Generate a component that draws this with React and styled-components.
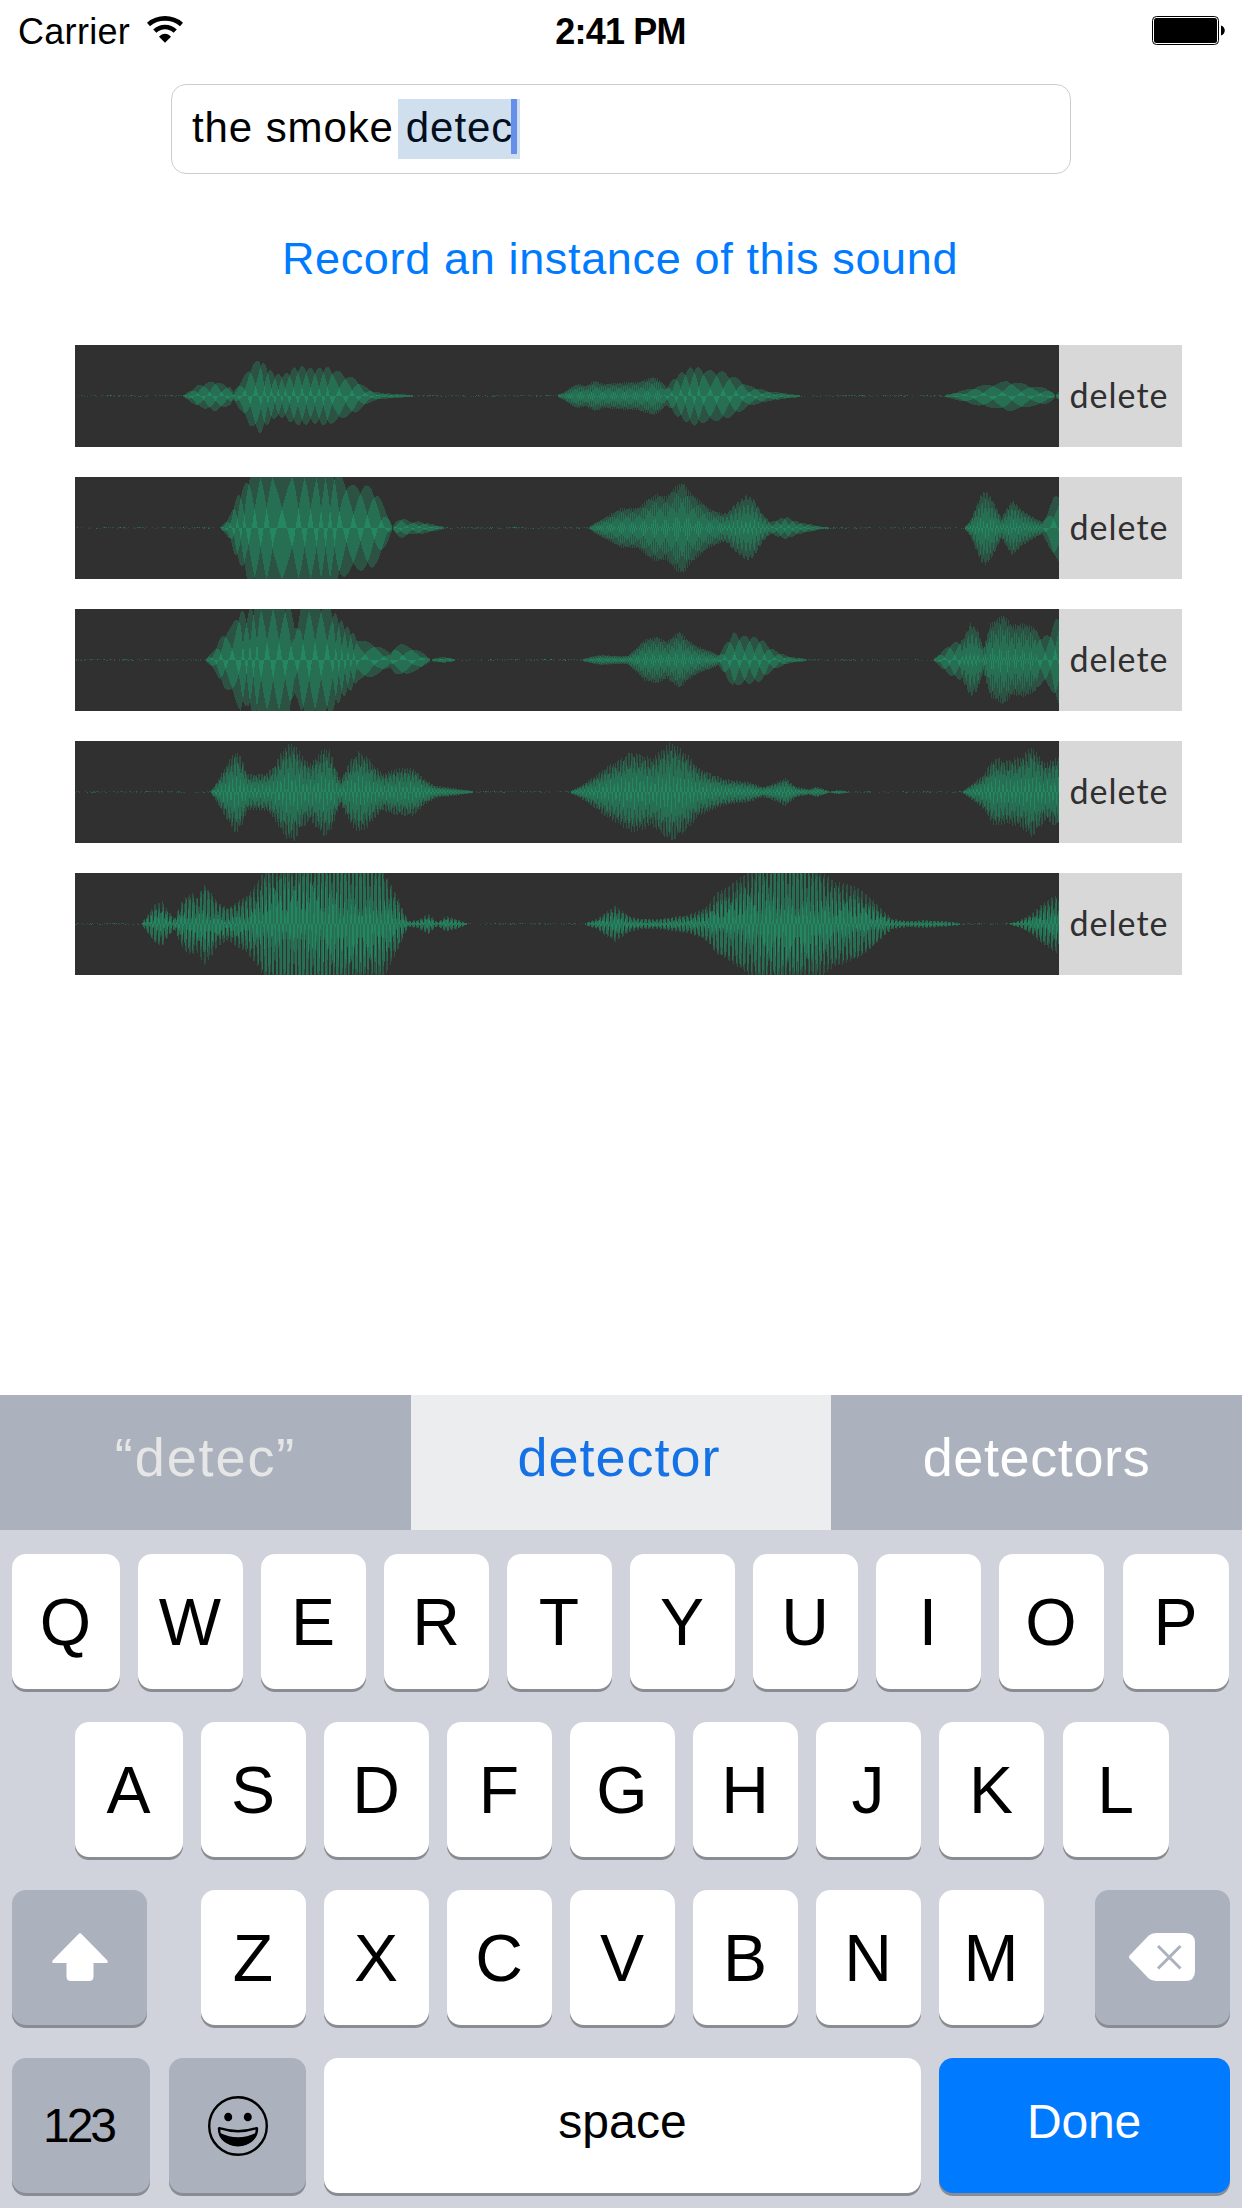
import React from 'react';
import styled, { createGlobalStyle } from 'styled-components';

const GlobalStyle = createGlobalStyle`
  *, *::before, *::after { box-sizing: border-box; }
  body { margin: 0; background: #fff; }
  button { border: 0; padding: 0; margin: 0; font: inherit; }
`;

const Screen = styled.div`
  width: 1242px;
  height: 2208px;
  display: flex;
  flex-direction: column;
  overflow: hidden;
  background: #fff;
  color: #000;
  font-family: 'Liberation Sans', Arial, sans-serif;
`;

const StatusBar = styled.header`
  height: 60px;
  padding: 0 17px 0 18px;
  display: grid;
  grid-template-columns: 1fr auto 1fr;
  font-size: 36px;
  line-height: 64px;
`;

const Carrier = styled.div`
  display: flex;
  align-items: flex-start;
  gap: 17px;
  letter-spacing: 0.3px;
  svg { margin-top: 16px; }
`;

const Clock = styled.div`
  font-weight: 700;
  letter-spacing: -0.8px;
  padding-right: 2px;
`;

const BatterySlot = styled.div`
  display: flex;
  justify-content: flex-end;
  padding-top: 16px;
`;

const Content = styled.main`
  flex: 1;
  display: flex;
  flex-direction: column;
  align-items: center;
  padding-top: 24px;
`;

const Field = styled.div`
  width: 900px;
  height: 90px;
  display: flex;
  align-items: flex-start;
  padding: 14px 20px;
  border: 1px solid #cdcdcd;
  border-radius: 15px;
  font-size: 42px;
  line-height: 58px;
  letter-spacing: 0.9px;
  white-space: pre;
`;

const Marked = styled.span`
  display: flex;
  height: 60px;
  margin-left: 4px;
  padding: 0 3px 0 8px;
  background: #d0dfee;
  color: #020f1f;
`;

const Caret = styled.i`
  width: 6px;
  height: 55px;
  margin-left: -2px;
  background: #658fe8;
`;

const RecordLink = styled.button`
  margin-top: 55px;
  height: 60px;
  padding-right: 2px;
  background: none;
  color: #007aff;
  font-size: 45px;
  line-height: 60px;
  letter-spacing: 0.65px;
`;

const Clips = styled.ul`
  list-style: none;
  width: 1107px;
  margin: 56px 0 0 15px;
  padding: 0;
  display: flex;
  flex-direction: column;
  gap: 30px;
`;

const Clip = styled.li`
  display: flex;
  height: 102px;
`;

const WaveSvg = styled.svg`
  flex: none;
  display: block;
  width: 984px;
  height: 102px;
  background: #303030;
`;

const DeleteButton = styled.button`
  flex: 1;
  padding: 0 3px 2px 0;
  background: #d8d8d8;
  color: #303030;
  font-family: Lato, sans-serif;
  font-weight: 400;
  font-size: 34px;
  line-height: 100px;
  letter-spacing: 1px;
`;

const Keyboard = styled.section`
  height: 813px;
  background: #d0d3db;
`;

const Suggestions = styled.div`
  height: 135px;
  display: grid;
  grid-template-columns: 411px 420px 411px;
`;

const Suggestion = styled.button`
  display: flex;
  justify-content: center;
  padding-right: ${(p) => p.$shift || 0}px;
  background: ${(p) => (p.$active ? '#ebedef' : '#abb1bd')};
  color: ${(p) => p.$color};
  font-size: 54px;
  line-height: 124px;
  letter-spacing: ${(p) => p.$track || 0.6}px;
`;

const Rows = styled.div`
  display: flex;
  flex-direction: column;
  gap: 33px;
  padding-top: 24px;
`;

const KeyRow = styled.div`
  display: flex;
  gap: 18px;
  height: 135px;
  padding-left: ${(p) => p.$inset}px;
`;

const tones = {
  light: ['#fff', '#000'],
  dark: ['#abb1bd', '#000'],
  blue: ['#007aff', '#fff'],
};

const Key = styled.button`
  width: ${(p) => p.$w || 105}px;
  height: 135px;
  margin-left: ${(p) => p.$ml || 0}px;
  padding-right: ${(p) => p.$shift || 0}px;
  display: flex;
  align-items: flex-start;
  justify-content: center;
  border-radius: 14px;
  background: ${(p) => tones[p.$tone || 'light'][0]};
  color: ${(p) => tones[p.$tone || 'light'][1]};
  box-shadow: 0 3px 0 #898c90;
  font-size: ${(p) => p.$size || 66}px;
  line-height: ${(p) => p.$line || 136}px;
  letter-spacing: ${(p) => p.$track || 1}px;
  svg { margin-top: ${(p) => p.$top || 0}px; }
`;

/* ---- waveforms ---- */

const WIDTH = 984;
const MID = 51;
const VOICES = 5;

// env: [x, amplitude] pairs; lobes: [x, lobe spacing] steps
const clips = [
  {
    env: [108,0.7,121,10,139,15,155,9,158,4,167,17,174,28,184,37,192,28,199,22,208,21,219,28,228,29,235,27,242,27,251,29,264,24,271,20,280,17,287,11,297,5,306,3,324,1.8,349,0.7,481,0.7,489,4,497,10,503,12,510,10,519,15,528,12,545,13,563,14,578,19,584,16,591,9,600,19,606,23,615,28,621,29,628,26,637,25,647,24,656,20,663,17,671,11,682,8,693,5,711,2.5,730,0.7,867,0.7,878,3,889,6,904,10,919,12,932,15,945,13,956,10,970,8,976,5,980,1,984,5],
    lobes: [0,12,160,11,186,7,212,8.500,256,13,481,2.2,590,9,628,13,867,19],
  },
  {
    env: [145,0.7,151,7,155,13,160,28,165,36,169,42,172,50,176,58,190,62,258,60,264,52,267,50,274,43,281,41,289,42,296,40,303,32,308,22,314,9,317,1,321,7,327,10,335,6,342,6.5,356,4,369,1,400,0.7,513,0.7,521,6,545,19,563,20,573,29,582,33,591,31,600,41,608,45,613,37,623,28,634,19,647,14,652,15,658,22,671,32,678,29,687,14,695,6,704,9,711,11,723,6,734,4,745,1.5,767,0.7,889,0.7,895,8,900,20,906,34,911,36,917,28,926,10,932,20,937,27,946,18,957,11,967,6,972,15,978,30,984,33],
    lobes: [0,7,172,12,199,20,219,12,242,9,264,14,317,12,513,2.2,648,4.2,695,8,889,3.3,966,16],
  },
  {
    env: [130,0.7,139,10,144,20,149,27,156,33,165,50,171,44,174,49,180,56,185,60,199,62,214,56,219,33,222,38,226,55,235,60,253,56,258,48,264,41,271,33,276,29,283,20,296,17,306,12,315,7,319,13,326,16,335,13,346,8,355,1,367,3,381,1,410,0.7,505,0.7,524,5,545,4,552,4,562,13,569,20,582,23,591,18,604,28,612,20,623,13,637,8,643,5,650,16,658,27,665,24,678,23,687,20,695,12,704,7,715,3,734,0.8,858,0.7,867,9,874,15,880,18,887,20,895,36,902,30,908,12,915,36,928,44,937,34,948,36,959,32,967,22,974,26,980,39,984,44],
    lobes: [0,9,150,13,166,7,185,12,226,12,258,6,283,19,505,2.3,643,10,858,10,886,4,905,2.3,962,10],
  },
  {
    env: [135,0.7,140,8,147,20,155,34,161,41,167,32,172,18,181,18,192,19,199,27,205,38,212,47,219,48,226,36,235,28,240,34,249,44,255,40,260,25,265,12,271,24,276,33,283,40,292,35,299,26,308,18,317,22,330,24,339,23,349,13,360,6,378,4,399,1,430,0.7,494,0.7,503,5,517,14,531,25,545,33,556,40,567,37,576,33,586,42,595,49,602,45,612,37,623,24,634,19,649,13,674,10,687,5,697,8,710,14,721,5,734,3,741,5.5,754,1,763,2,774,0.8,887,0.7,895,7,908,17,917,32,922,34,930,31,946,35,956,45,963,37,970,28,978,33,984,34],
    lobes: [0,1.37],
    comb: 0.3,
    combPeriod: 2.7,
    fullness: 0.7,
  },
  {
    env: [66,0.7,74,12,80,20,87,22,92,14,99,6,105,20,110,27,117,31,121,26,129,40,135,33,142,22,153,16,162,23,171,28,181,40,187,50,192,62,240,74,290,66,306,60,310,50,315,40,322,27,328,13,333,3,342,4,353,10,362,2,371,8,378,6,392,1,420,0.7,508,0.7,521,5,531,12,540,18,545,14,556,7,567,5,582,5,612,9,626,14,634,20,641,31,652,36,663,44,673,52,686,62,710,70,737,60,748,50,760,42,782,36,797,24,808,13,817,5,834,3,848,4,867,3,889,0.8,933,0.7,945,4,956,10,967,20,976,26,984,29],
    lobes: [0,1.37],
    comb: 0.8,
    combPeriod: 3.8,
    fullness: 0.5,
  },
];

const noise = (n) => {
  const s = Math.sin(n * 127.1 + 11.7) * 43758.5453;
  return s - Math.floor(s);
};

function amplitudeAt(env, x) {
  if (x <= env[0]) return 0.7;
  for (let i = 2; i < env.length; i += 2) {
    if (x <= env[i]) {
      const t = (x - env[i - 2]) / (env[i] - env[i - 2]);
      return env[i - 1] + t * (env[i + 1] - env[i - 1]);
    }
  }
  return env[env.length - 1];
}

function spacingAt(lobes, x) {
  let s = lobes[1];
  for (let i = 0; i < lobes.length; i += 2) if (x >= lobes[i]) s = lobes[i + 1];
  return s;
}

function buildVoices({ env, lobes, comb = 0, combPeriod = 4, fullness = 1 }, seed) {
  const paths = Array.from({ length: VOICES }, () => `M0 ${MID}`);
  let phase = 0;
  for (let x = 0; x < WIDTH; x += 1) {
    const amp = amplitudeAt(env, x);
    phase += (2 * Math.PI) / (VOICES * spacingAt(lobes, x));
    const dip = 1 - comb * Math.abs(Math.sin((Math.PI * x) / combPeriod)) ** 7;
    for (let v = 0; v < VOICES; v += 1) {
      const swing = Math.sin(phase + (v * 2 * Math.PI) / VOICES);
      const shaped = Math.sign(swing) * Math.abs(swing) ** fullness;
      let y = amp * dip * shaped * 1.03;
      if (amp < 1.2) {
        const r = noise(x * 7 + v * 131 + seed * 977);
        y = r > 0.92 ? 1 : r < 0.05 ? -1 : 0;
      }
      const edge = Math.max(0, Math.min(102, MID - Math.round(y)));
      paths[v] += `V${edge}H${x + 1}`;
    }
  }
  return paths.map((p) => `${p}V${MID}Z`);
}

function Waveform({ clip, seed }) {
  return (
    <WaveSvg viewBox="0 0 984 102" shapeRendering="crispEdges">
      {buildVoices(clip, seed).map((d, i) => (
        <path key={i} d={d} fill="rgb(24,255,165)" fillOpacity="0.17" />
      ))}
    </WaveSvg>
  );
}

/* ---- icons ---- */

const WifiIcon = () => (
  <svg width="36" height="28" viewBox="0 0 36 28" fill="none" stroke="#000" strokeWidth="4.6">
    <path d="M1.500 8.400C11 0.400 25 0.400 34.500 8.400" />
    <path d="M7.800 15.200C13.500 9.600 22.500 9.600 28.200 15.200" />
    <path d="M18 26.800L12 20.800C15.400 16.700 20.600 16.700 24 20.800Z" fill="#000" stroke="none" />
  </svg>
);

const BatteryIcon = () => (
  <svg width="73" height="29" viewBox="0 0 73 29">
    <rect x="0.500" y="0.500" width="66" height="28" rx="4" fill="none" stroke="#000" />
    <rect x="2" y="2" width="63" height="25" rx="2.500" />
    <path d="M69 9.500C74 11 74 18 69 19.500Z" />
  </svg>
);

const ShiftIcon = () => (
  <svg width="56" height="48" viewBox="0 0 56 48" fill="#fff">
    <path d="M26.800 0.700Q28 -0.500 29.200 0.700L55.400 27.400Q56.400 30 54.500 30H41.500V43.500Q41.500 48 37 48H19Q14.500 48 14.500 43.500V30H1.500Q-0.400 30 0.600 27.400Z" />
  </svg>
);

const BackspaceIcon = () => (
  <svg width="66" height="48" viewBox="0 0 66 48">
    <path d="M0.800 22.200L19.500 2.800Q22.500 0 27 0H56Q66 0 66 10V38Q66 48 56 48H27Q22.500 48 19.500 45.200L0.800 25.800Q-0.800 24 0.800 22.200Z" fill="#fff" />
    <path d="M29 13L51.500 35.500M51.500 13L29 35.500" stroke="#abb1bd" strokeWidth="3" />
  </svg>
);

const EmojiIcon = () => (
  <svg width="60" height="60" viewBox="0 0 60 60">
    <circle cx="30" cy="30" r="28.800" fill="none" stroke="#000" strokeWidth="2.400" />
    <ellipse cx="20.200" cy="21" rx="4" ry="4.300" />
    <ellipse cx="39.800" cy="21" rx="4" ry="4.300" />
    <path d="M11 32.800Q10.800 31.800 12.500 32.400Q30 38 47.500 32.400Q49.200 31.800 49 32.800C49 42 41 49.200 30 49.200S11 42 11 32.800Z" fill="none" stroke="#000" strokeWidth="2.400" strokeLinejoin="round" />
    <path d="M12 37Q30 45.500 48 37C46 45 39.500 50 30 50S14 45 12 37Z" />
  </svg>
);

export default function App() {
  return (
    <>
      <GlobalStyle />
      <Screen>
        <StatusBar>
          <Carrier>
            <span>Carrier</span>
            <WifiIcon />
          </Carrier>
          <Clock>2:41 PM</Clock>
          <BatterySlot>
            <BatteryIcon />
          </BatterySlot>
        </StatusBar>

        <Content>
          <Field>
            the smoke
            <Marked>
              detec
              <Caret />
            </Marked>
          </Field>
          <RecordLink>Record an instance of this sound</RecordLink>
          <Clips>
            {clips.map((clip, i) => (
              <Clip key={i}>
                <Waveform clip={clip} seed={i + 1} />
                <DeleteButton>delete</DeleteButton>
              </Clip>
            ))}
          </Clips>
        </Content>

        <Keyboard>
          <Suggestions>
            <Suggestion $color="#e6e6e6" $track={1.9}>“detec”</Suggestion>
            <Suggestion $active $color="#1571e6" $track={1} $shift={4}>detector</Suggestion>
            <Suggestion $color="#fff">detectors</Suggestion>
          </Suggestions>
          <Rows>
            <KeyRow $inset={12}>
              {[...'QWERTYUIOP'].map((c) => (
                <Key key={c} $w={c === 'Q' ? 108 : c === 'P' ? 106 : 105} $ml={c === 'P' ? 1 : 0}>{c}</Key>
              ))}
            </KeyRow>
            <KeyRow $inset={75}>
              {[...'ASDFGHJKL'].map((c) => (
                <Key key={c} $w={c === 'A' ? 108 : c === 'L' ? 106 : 105} $ml={c === 'L' ? 1 : 0}>{c}</Key>
              ))}
            </KeyRow>
            <KeyRow $inset={12}>
              <Key $tone="dark" $w={135} $top={43} aria-label="Shift"><ShiftIcon /></Key>
              {[...'ZXCVBNM'].map((c) => (
                <Key key={c} $ml={c === 'Z' ? 36 : 0}>{c}</Key>
              ))}
              <Key $tone="dark" $w={135} $ml={33} $top={43} $shift={1} aria-label="Delete"><BackspaceIcon /></Key>
            </KeyRow>
            <KeyRow $inset={12}>
              <Key $tone="dark" $w={138} $size={48} $track={-3} $shift={5}>123</Key>
              <Key $tone="dark" $w={137} $ml={1} $top={38} aria-label="Emoji"><EmojiIcon /></Key>
              <Key $w={597} $size={48} $line={127} $track={0.1}>space</Key>
              <Key $tone="blue" $w={291} $size={48} $line={127} $track={-0.2} $shift={1}>Done</Key>
            </KeyRow>
          </Rows>
        </Keyboard>
      </Screen>
    </>
  );
}
